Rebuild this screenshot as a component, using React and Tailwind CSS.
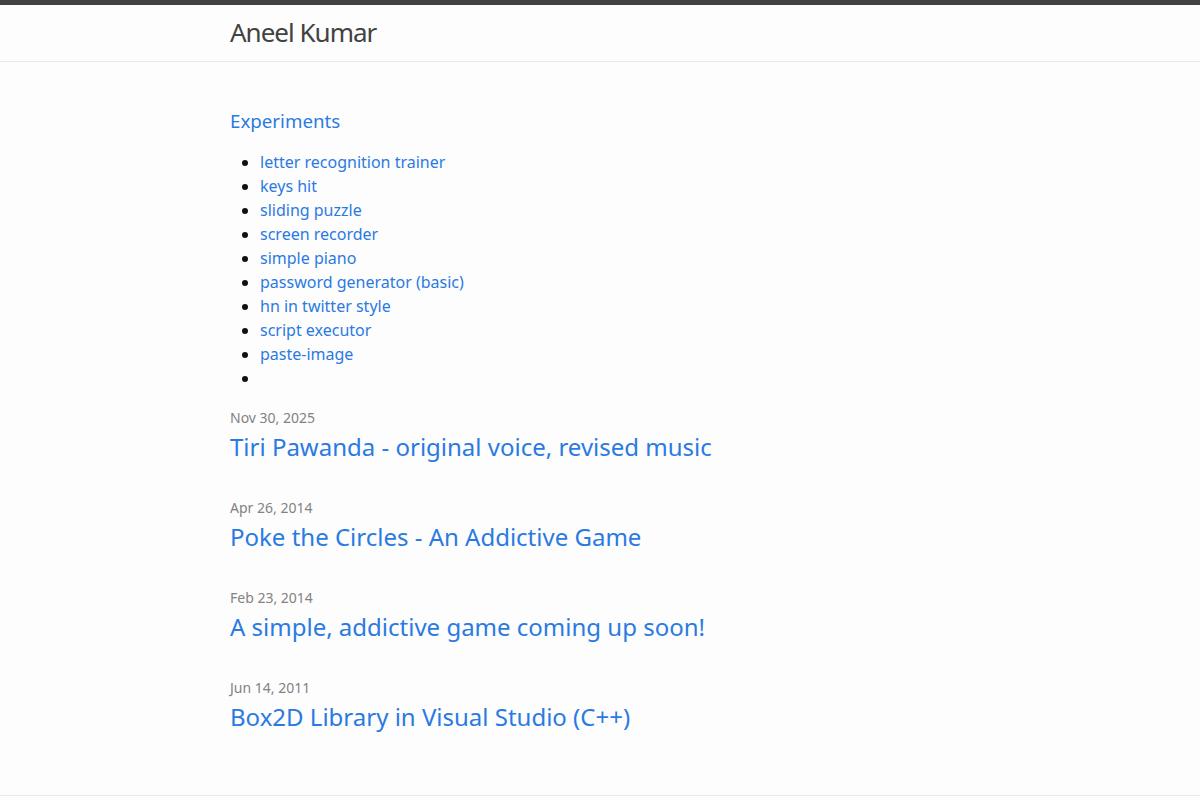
export default function App() {
  const experiments = [
    "letter recognition trainer",
    "keys hit",
    "sliding puzzle",
    "screen recorder",
    "simple piano",
    "password generator (basic)",
    "hn in twitter style",
    "script executor",
    "paste-image",
    "",
  ];
  const posts = [
    { date: "Nov 30, 2025", title: "Tiri Pawanda - original voice, revised music" },
    { date: "Apr 26, 2014", title: "Poke the Circles - An Addictive Game" },
    { date: "Feb 23, 2014", title: "A simple, addictive game coming up soon!" },
    { date: "Jun 14, 2011", title: "Box2D Library in Visual Studio (C++)" },
  ];
  return (
    <div
      className="min-h-[800px] bg-[#fdfdfd] text-[#111111] text-[16px] leading-[24px]"
      style={{ fontFamily: '"Noto Sans", "Open Sans", sans-serif' }}
    >
      <header className="border-t-[5px] border-t-[#424242] border-b border-b-[#e8e8e8] h-[62px]">
        <div className="max-w-[800px] mx-auto px-[30px]">
          <a
            href="#"
            className="block text-[26px] font-normal leading-[54px] tracking-[-1px] text-[#424242]"
          >
            Aneel Kumar
          </a>
        </div>
      </header>
      <main className="pt-[44px] pb-[28px]">
        <div className="max-w-[800px] mx-auto px-[30px]">
          <h3 className="text-[18.72px] leading-[30px] text-[#2a7ae2] mb-[14px]">Experiments</h3>
          <ul className="list-disc ml-[30px] mb-[17px]">
            {experiments.map((e, i) => (
              <li key={i} className="h-[24px] leading-[24px]">
                <a href="#" className="text-[#2a7ae2]">{e}</a>
              </li>
            ))}
          </ul>
          <ul>
            {posts.map((p) => (
              <li key={p.date} className="mb-[32px]">
                <div className="text-[14px] leading-[21px] text-[#828282]">{p.date}</div>
                <h3 className="mt-[1px] text-[24px] leading-[36px]">
                  <a href="#" className="text-[#2a7ae2]">{p.title}</a>
                </h3>
              </li>
            ))}
          </ul>
        </div>
      </main>
      <footer className="border-t border-t-[#e8e8e8] h-[40px]" />
    </div>
  );
}
